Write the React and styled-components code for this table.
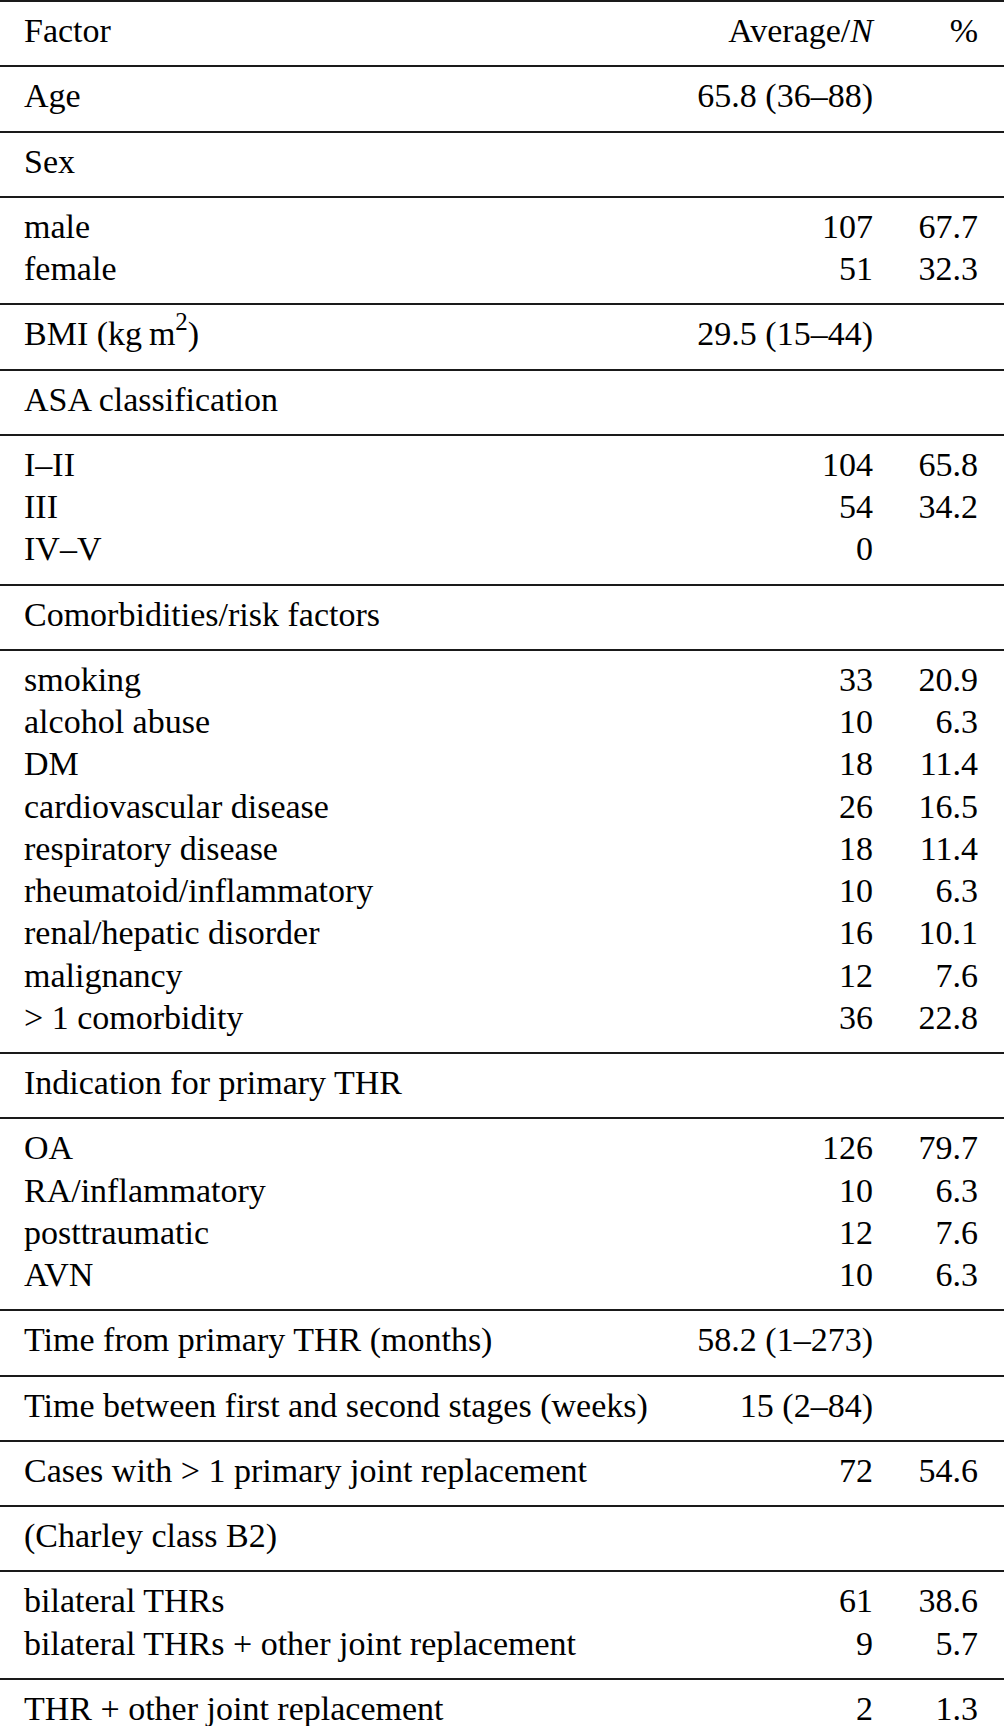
import React from "react";
import styled, { createGlobalStyle } from "styled-components";

const GlobalStyle = createGlobalStyle`
  html, body {
    margin: 0;
    padding: 0;
    background: #fff;
  }
  body {
    font-family: "Liberation Serif", "Times New Roman", serif;
    color: #000;
  }
`;

const Table = styled.div`
  width: 1004px;
  font-size: 34px;
`;

const Group = styled.div`
  border-top: 2px solid #1a1a1a;
  padding: 8px 0 13px;
`;

const Row = styled.div`
  display: grid;
  grid-template-columns: minmax(0, 1fr) 250px 105px;
  padding: 0 26px 0 24px;
  line-height: 42.25px;
  height: 42.25px;
  white-space: nowrap;
`;

const Label = styled.div`
  overflow: visible;
`;

const Num = styled.div`
  text-align: right;
`;

const Sup = styled.sup`
  font-size: 25px;
  line-height: 0;
  vertical-align: 15px;
`;

const Italic = styled.i`
  font-style: italic;
`;

const groups = [
  [[<>Factor</>, <>Average/<Italic>N</Italic></>, "%"]],
  [["Age", "65.8 (36–88)", ""]],
  [["Sex", "", ""]],
  [
    ["male", "107", "67.7"],
    ["female", "51", "32.3"],
  ],
  [[<>BMI (kg{"\u2009"}m<Sup>2</Sup>)</>, "29.5 (15–44)", ""]],
  [["ASA classification", "", ""]],
  [
    ["I–II", "104", "65.8"],
    ["III", "54", "34.2"],
    ["IV–V", "0", ""],
  ],
  [["Comorbidities/risk factors", "", ""]],
  [
    ["smoking", "33", "20.9"],
    ["alcohol abuse", "10", "6.3"],
    ["DM", "18", "11.4"],
    ["cardiovascular disease", "26", "16.5"],
    ["respiratory disease", "18", "11.4"],
    ["rheumatoid/inflammatory", "10", "6.3"],
    ["renal/hepatic disorder", "16", "10.1"],
    ["malignancy", "12", "7.6"],
    ["> 1 comorbidity", "36", "22.8"],
  ],
  [["Indication for primary THR", "", ""]],
  [
    ["OA", "126", "79.7"],
    ["RA/inflammatory", "10", "6.3"],
    ["posttraumatic", "12", "7.6"],
    ["AVN", "10", "6.3"],
  ],
  [["Time from primary THR (months)", "58.2 (1–273)", ""]],
  [["Time between first and second stages (weeks)", "15 (2–84)", ""]],
  [["Cases with > 1 primary joint replacement", "72", "54.6"]],
  [["(Charley class B2)", "", ""]],
  [
    ["bilateral THRs", "61", "38.6"],
    ["bilateral THRs + other joint replacement", "9", "5.7"],
  ],
  [["THR + other joint replacement", "2", "1.3"]],
];

export default function App() {
  return (
    <>
      <GlobalStyle />
      <Table>
        {groups.map((rows, i) => (
          <Group key={i}>
            {rows.map((r, j) => (
              <Row key={j}>
                <Label>{r[0]}</Label>
                <Num>{r[1]}</Num>
                <Num>{r[2]}</Num>
              </Row>
            ))}
          </Group>
        ))}
      </Table>
    </>
  );
}
